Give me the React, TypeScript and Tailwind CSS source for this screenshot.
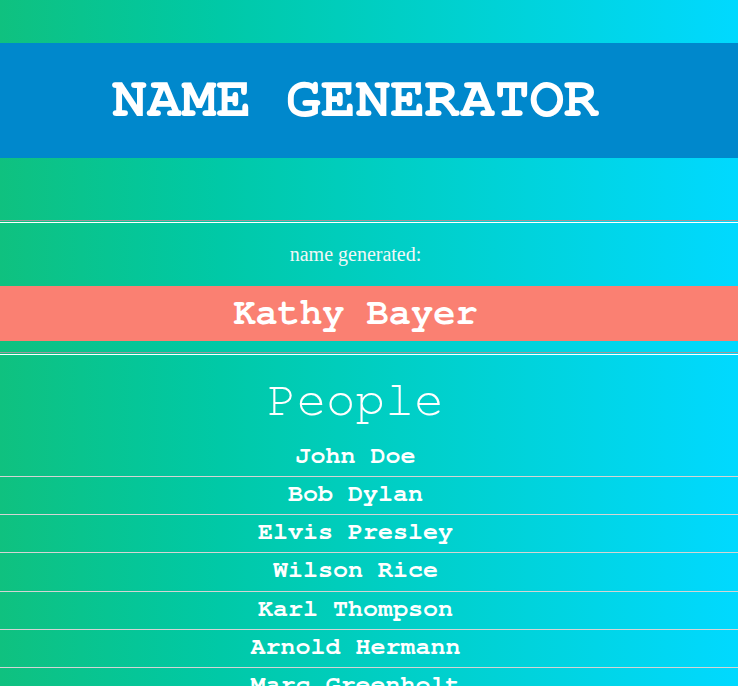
const people = [
  "John Doe",
  "Bob Dylan",
  "Elvis Presley",
  "Wilson Rice",
  "Karl Thompson",
  "Arnold Hermann",
  "Marc Greenholt",
  "Lisa Monroe",
  "Tom Baker",
]

const Rule = () => (
  <div className="w-full">
    <div className="h-px bg-[#9a9a9a]"></div>
    <div className="h-px"></div>
    <div className="h-px bg-white"></div>
  </div>
)

const App = () => {
  const mono = {
    fontFamily:
      '"Nimbus Mono PS", "Nimbus Mono L", FreeMono, "Courier 10 Pitch", Courier, "Liberation Mono", monospace',
  }
  return (
    <div className="min-h-screen w-full bg-linear-to-r from-[#0fc17f] to-[#00d9ff] pt-[43px] text-white">
      <header className="bg-[#0088cc] pt-[23px] pb-[26px] pr-[27px] text-center">
        <h1 className="text-[58px] leading-[66px] font-bold" style={mono}>
          NAME GENERATOR
        </h1>
      </header>

      <div className="h-[62px]"></div>
      <Rule />

      <p
        className="mt-[20px] pr-[27px] text-center text-[20px] leading-[23px] text-[#f2f7f7]"
        style={{ fontFamily: '"Liberation Serif", "Times New Roman", serif' }}
      >
        name generated:
      </p>

      <div className="mt-[20px] h-[55px] bg-[#fa8072] pr-[27px] text-center">
        <span className="text-[37px] leading-[53px] font-bold" style={mono}>
          Kathy Bayer
        </span>
      </div>

      <div className="h-[11px]"></div>
      <Rule />

      <h2 className="mt-[18px] pr-[27px] text-center text-[49px] leading-[55.5px] font-normal" style={mono}>
        People
      </h2>

      <ul className="mt-[10px]">
        {people.map((name) => (
          <li
            key={name}
            className="border-b border-[#d4d4d4] pb-[3px] pr-[27px] text-center text-[25px] leading-[34.3px] font-bold"
            style={mono}
          >
            {name}
          </li>
        ))}
      </ul>
    </div>
  )
}

export default App
